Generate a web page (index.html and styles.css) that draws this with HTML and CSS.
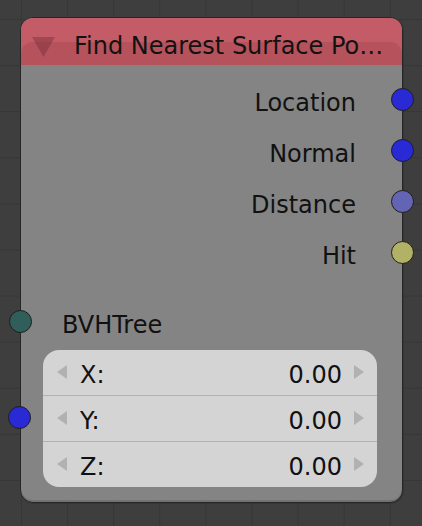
FILE: index.html
```html
<!DOCTYPE html>
<html>
<head>
<meta charset="utf-8">
<link rel="stylesheet" href="styles.css">
</head>
<body>
<div class="node">
  <div class="header">
    <svg class="collapse" width="23" height="20" viewBox="0 0 23 20"><polygon points="0,0 23,0 11.5,20" fill="#7a2f37" fill-opacity="0.45"/></svg>
    <span class="title">Find Nearest Surface Po…</span>
  </div>
  <div class="outputs">
    <div class="row out">Location<span class="socket s-vec sock-r"></span></div>
    <div class="row out">Normal<span class="socket s-vec sock-r"></span></div>
    <div class="row out">Distance<span class="socket s-float sock-r"></span></div>
    <div class="row out">Hit<span class="socket s-bool sock-r"></span></div>
  </div>
  <div class="row in">BVHTree<span class="socket s-tree sock-l"></span></div>
  <div class="vector">
    <div class="vrow">
      <span class="arr arr-l"></span><span class="lbl">X:</span><span class="val">0.00</span><span class="arr arr-r"></span>
    </div>
    <div class="vrow">
      <span class="socket s-vec sock-v"></span>
      <span class="arr arr-l"></span><span class="lbl">Y:</span><span class="val">0.00</span><span class="arr arr-r"></span>
    </div>
    <div class="vrow">
      <span class="arr arr-l"></span><span class="lbl">Z:</span><span class="val">0.00</span><span class="arr arr-r"></span>
    </div>
  </div>
</div>
</body>
</html>
```
FILE: styles.css
```css
html, body {
  margin: 0;
  padding: 0;
  width: 422px;
  height: 526px;
  overflow: hidden;
}
body {
  background-color: #3e3e3e;
  background-image:
    linear-gradient(to right, #363636 1px, transparent 1px),
    linear-gradient(to bottom, #363636 1px, transparent 1px);
  background-size: 46.1px 46.1px;
  background-position: 21px 19px;
  font-family: "DejaVu Sans", sans-serif;
  font-size: 24px;
  color: #111111;
}
.node {
  position: relative;
  box-sizing: border-box;
  margin: 17px 0 0 20px;
  width: 383px;
  height: 486px;
  background: #848484;
  border: 1px solid #262626;
  border-radius: 13px;
  box-shadow: inset 0 -2px 0 rgba(0,0,0,0.13), 1px 1px 0 rgba(0,0,0,0.12);
}
.header {
  position: relative;
  height: 47px;
  box-sizing: border-box;
  background: #c45c67;
  border-radius: 12px 12px 0 0;
  display: flex;
  align-items: flex-start;
  overflow: hidden;
}
.header::after {
  content: "";
  position: absolute;
  left: 0;
  right: 0;
  top: 24px;
  bottom: 0;
  border-radius: 12px 12px 0 0;
  background: rgba(90, 20, 30, 0.14);
}
.collapse {
  position: relative;
  z-index: 1;
  margin: 19px 0 0 11px;
  flex: none;
}
.title {
  position: relative;
  z-index: 1;
  margin: 14px 0 0 19px;
  line-height: 28px;
  white-space: nowrap;
  color: #121212;
}
.outputs {
  padding-top: 12px;
}
.row {
  position: relative;
  height: 51px;
  line-height: 52px;
  white-space: nowrap;
}
.out {
  text-align: right;
  padding-right: 46px;
}
.in {
  margin-top: 18px;
  padding-left: 41px;
}
.socket {
  position: absolute;
  box-sizing: border-box;
  width: 23px;
  height: 23px;
  border-radius: 50%;
  border: 1px solid #1e1e1e;
}
.sock-r { right: -12px; top: 11px; }
.sock-l { left: -12px; top: 11px; }
.sock-v { left: -35px; top: 10px; }
.s-vec { background: #2929d5; }
.s-float { background: #6464b5; }
.s-bool { background: #b2b267; }
.s-tree { background: #2f5e5b; }
.vector {
  margin: 0 0 0 22px;
  width: 334px;
  background: #d4d4d4;
  border-radius: 16px;
}
.vrow {
  position: relative;
  box-sizing: border-box;
  height: 46px;
  padding: 5px 13px 0 14px;
  line-height: 41px;
  display: flex;
  align-items: center;
  border-bottom: 1px solid #b2b2b2;
}
.vrow:last-child {
  border-bottom: none;
  height: 45px;
}
.arr {
  width: 0;
  height: 0;
  border-top: 7px solid transparent;
  border-bottom: 7px solid transparent;
  margin-top: -6px;
  flex: none;
}
.arr-l { border-right: 10px solid #b1b1b1; }
.arr-r { border-left: 10px solid #b1b1b1; }
.lbl {
  margin-left: 13px;
  flex: 1;
}
.val {
  margin-right: 12px;
}
```
